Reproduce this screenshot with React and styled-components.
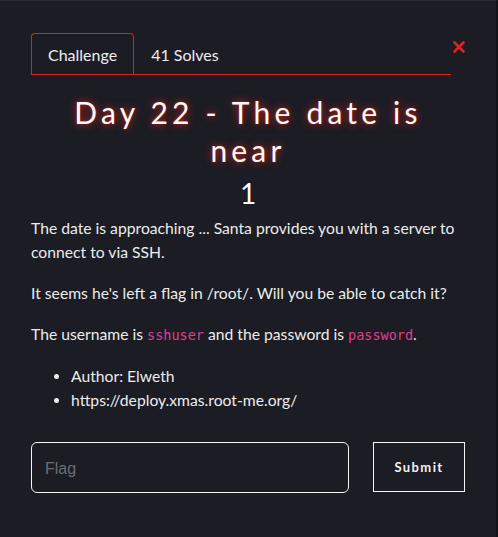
import styled, { createGlobalStyle } from "styled-components";

const Global = createGlobalStyle`
  html, body {
    margin: 0;
    padding: 0;
    background: #0f1015;
  }
  * { box-sizing: border-box; }
`;

const Modal = styled.div`
  width: 498px;
  height: 537px;
  background: #1b1c24;
  border-top: 1px solid #2a2b33;
  border-right: 2px solid #121318;
  padding: 32px 31px 0 31px;
  font-family: Lato, "Noto Sans", sans-serif;
  color: #f1f1f1;
`;

const Header = styled.div`
  display: flex;
  align-items: flex-start;
`;

const Tabs = styled.div`
  flex: 0 0 420px;
  display: flex;
  border-bottom: 1px solid #d9231c;
`;

const Tab = styled.div`
  height: 41px;
  padding: 0 16px;
  display: flex;
  align-items: center;
  font-size: 16px;
  color: #eee;
  border: 1px solid ${(p) => (p.active ? "#d9231c" : "transparent")};
  border-bottom: none;
  border-radius: 4px 4px 0 0;
`;

const Close = styled.button`
  background: none;
  border: none;
  padding: 0;
  margin: 7px 0 0 1px;
  width: 14px;
  height: 14px;
  cursor: pointer;
`;

const Title = styled.h1`
  margin: 18px 0 0;
  padding: 0 12px;
  text-align: center;
  font-weight: 400;
  font-size: 30px;
  line-height: 38px;
  letter-spacing: 4.2px;
  color: #fbfbfb;
  text-shadow: 0 0 9px #d2291e, 0 0 3px #8a1a14;
`;

const Points = styled.div`
  text-align: center;
  font-size: 28px;
  line-height: 34px;
  color: #fafafa;
  margin-top: 7px;
`;

const Desc = styled.div`
  margin-top: 6px;
  font-size: 15.7px;
  line-height: 24px;
  color: #ececec;
  p {
    margin: 0 0 17px;
  }
  ul {
    margin: 0;
    padding-left: 40px;
  }
`;

const Code = styled.code`
  font-family: "DejaVu Sans Mono", "Liberation Mono", monospace;
  font-size: 13.5px;
  color: #e13f8c;
`;

const Form = styled.div`
  display: flex;
  align-items: flex-start;
  gap: 24px;
  margin-top: 30px;
`;

const Input = styled.input`
  width: 318px;
  height: 51px;
  background: transparent;
  border: 1px solid #f4f4f4;
  border-radius: 6px;
  padding: 2px 13px 0;
  font-family: "Liberation Sans", Arial, sans-serif;
  font-size: 16px;
  color: #eee;
  outline: none;
  &::placeholder {
    color: #6b6e75;
  }
`;

const Submit = styled.button`
  width: 92px;
  height: 50px;
  background: transparent;
  border: 1px solid #f4f4f4;
  color: #f2f2f2;
  font-family: Lato, "Noto Sans", sans-serif;
  font-weight: 700;
  font-size: 13px;
  letter-spacing: 1.4px;
  cursor: pointer;
`;

export default function App() {
  return (
    <>
      <Global />
      <Modal>
        <Header>
          <Tabs>
            <Tab active>Challenge</Tab>
            <Tab>41 Solves</Tab>
          </Tabs>
          <Close aria-label="close">
            <svg width="14" height="14" viewBox="0 0 14 14">
              <path
                d="M2.5 2.5 L11.5 11.5 M11.5 2.5 L2.5 11.5"
                stroke="#e3241c"
                strokeWidth="2.6"
                strokeLinecap="round"
              />
            </svg>
          </Close>
        </Header>
        <Title>Day 22 - The date is near</Title>
        <Points>1</Points>
        <Desc>
          <p>
            The date is approaching ... Santa provides you with a server to
            connect to via SSH.
          </p>
          <p>It seems he's left a flag in /root/. Will you be able to catch it?</p>
          <p>
            The username is <Code>sshuser</Code> and the password is{" "}
            <Code>password</Code>.
          </p>
          <ul>
            <li>Author: Elweth</li>
            <li>https://deploy.xmas.root-me.org/</li>
          </ul>
        </Desc>
        <Form>
          <Input placeholder="Flag" />
          <Submit>Submit</Submit>
        </Form>
      </Modal>
    </>
  );
}
